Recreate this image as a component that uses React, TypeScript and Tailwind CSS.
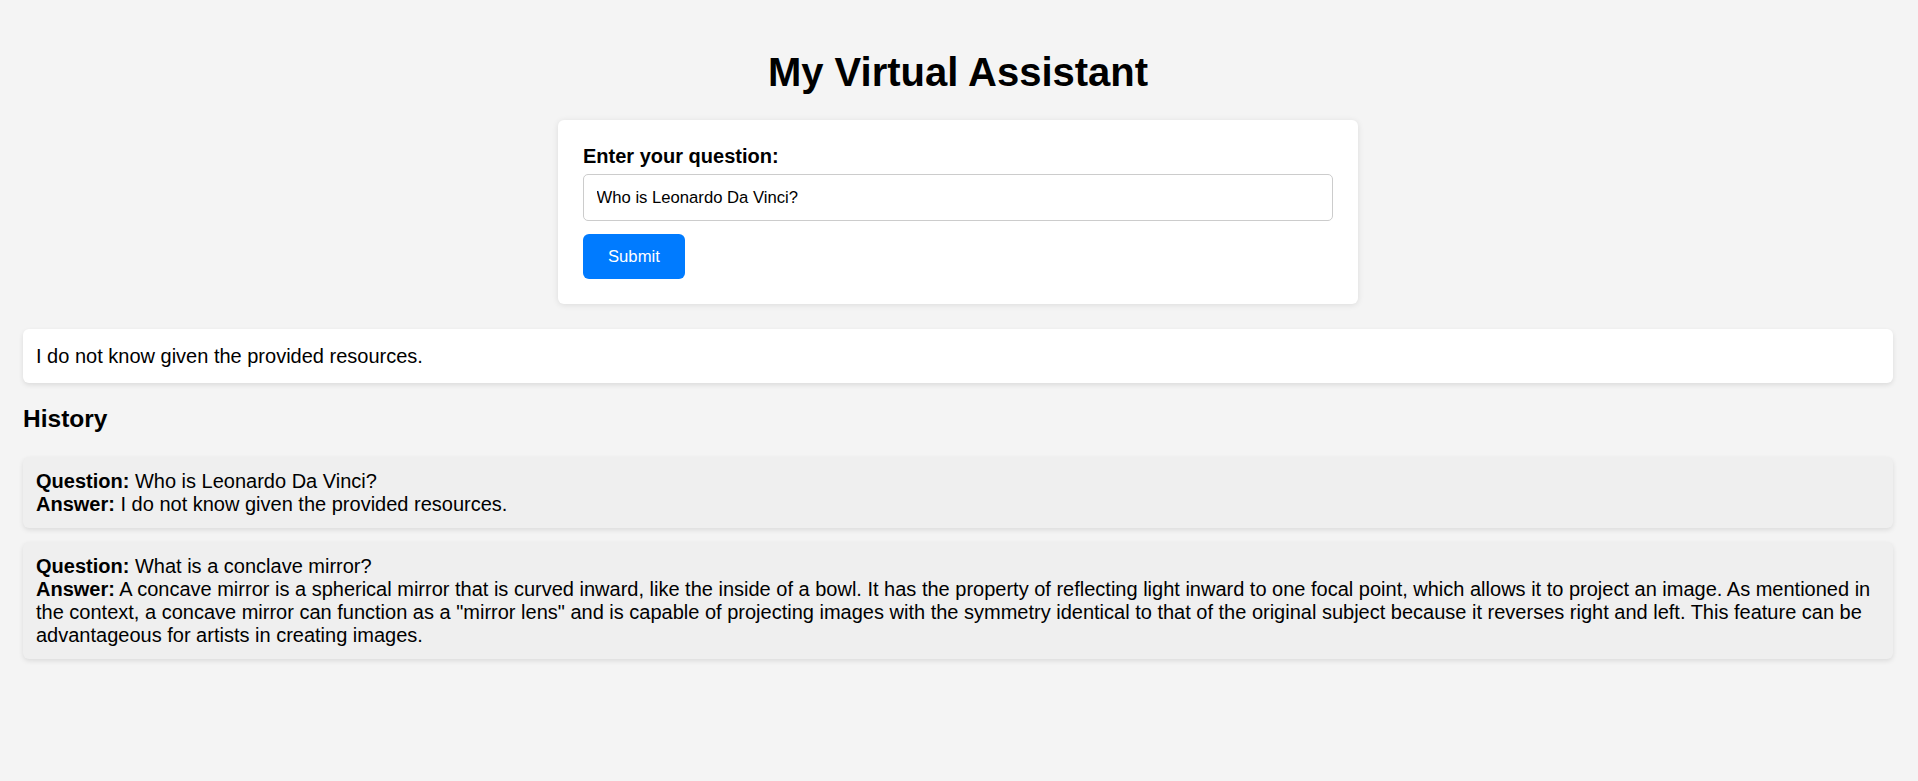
import { useState } from "react";

const history = [
  {
    question: "Who is Leonardo Da Vinci?",
    answer: "I do not know given the provided resources.",
  },
  {
    question: "What is a conclave mirror?",
    answer:
      'A concave mirror is a spherical mirror that is curved inward, like the inside of a bowl. It has the property of reflecting light inward to one focal point, which allows it to project an image. As mentioned in the context, a concave mirror can function as a "mirror lens" and is capable of projecting images with the symmetry identical to that of the original subject because it reverses right and left. This feature can be advantageous for artists in creating images.',
  },
];

export default function App() {
  const [question, setQuestion] = useState("Who is Leonardo Da Vinci?");

  return (
    <div
      className="min-h-screen bg-[#f4f4f4] pt-[49px] pr-[25px] pb-[40px] pl-[23px] text-black"
      style={{ fontFamily: '"Liberation Sans", Arial, sans-serif' }}
    >
      <h1 className="text-center text-[40px] leading-[46px] font-bold">
        My Virtual Assistant
      </h1>

      <div className="mx-auto mt-[25px] flex w-[800px] flex-col items-start rounded-[6px] bg-white p-[25px] shadow-[0_1px_6px_rgba(0,0,0,0.1)]">
        <label
          htmlFor="question"
          className="block text-[20px] leading-[23px] font-bold"
        >
          Enter your question:
        </label>
        <input
          id="question"
          value={question}
          onChange={(e) => setQuestion(e.target.value)}
          className="mt-[6px] h-[47px] w-full rounded-[5px] border border-[#cccccc] bg-white px-[12.5px] text-[16.67px] outline-none"
        />
        <button className="mt-[13px] h-[45px] cursor-pointer rounded-[6px] bg-[#007bff] px-[25px] text-[16.67px] text-white">
          Submit
        </button>
      </div>

      <div className="mt-[25px] rounded-[6px] bg-white pt-[16px] pr-[13px] pb-[15px] pl-[13px] text-[20px] leading-[23px] shadow-[0_2px_5px_rgba(0,0,0,0.1)]">
        I do not know given the provided resources.
      </div>

      <h3 className="mt-[22px] text-[24.5px] leading-[28px] font-bold">
        History
      </h3>

      <div className="mt-[24px] flex flex-col gap-[14px]">
        {history.map((item) => (
          <div
            key={item.question}
            className="rounded-[6px] bg-[#efefef] pt-[13px] pr-[13px] pb-[12px] pl-[13px] text-[20px] leading-[23px] shadow-[0_2px_5px_rgba(0,0,0,0.1)]"
          >
            <div>
              <strong>Question:</strong> {item.question}
            </div>
            <div>
              <strong>Answer:</strong> {item.answer}
            </div>
          </div>
        ))}
      </div>
    </div>
  );
}
